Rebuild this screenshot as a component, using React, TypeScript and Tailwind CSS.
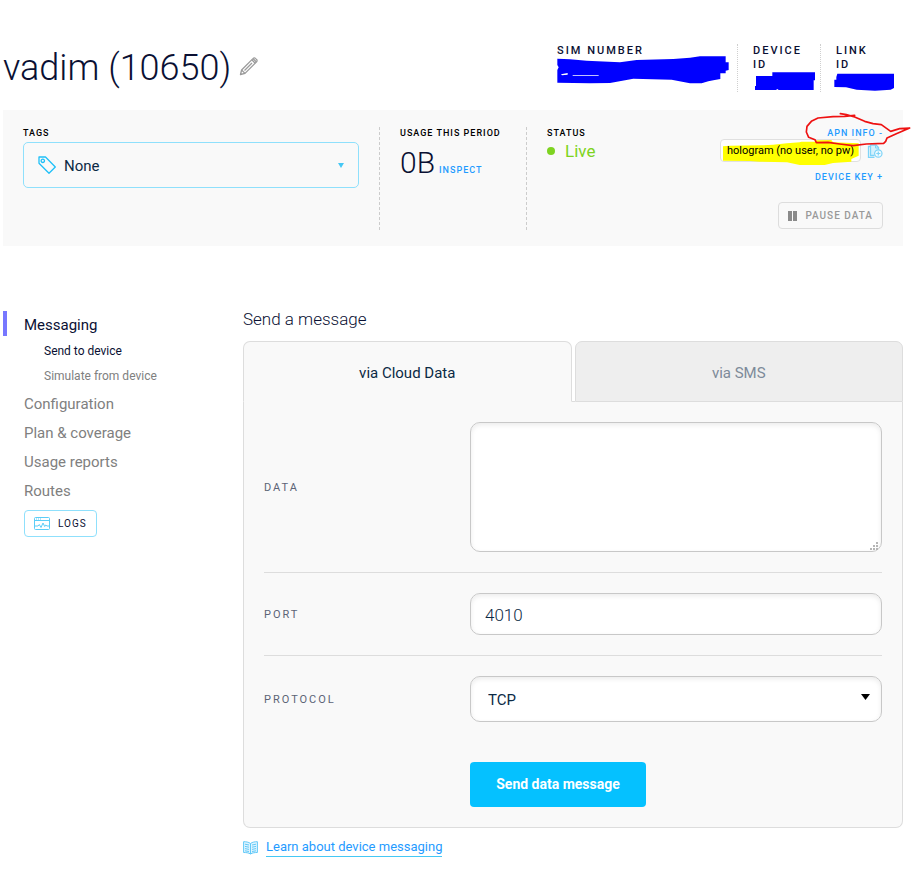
import { useState } from "react";

const NAV_ITEMS = ["Configuration", "Plan & coverage", "Usage reports", "Routes"];

const fieldClass =
  "block w-full rounded-[10px] border border-[#c8c8c8] bg-white text-[#0b2a45] shadow-[inset_0_2px_5px_rgba(0,0,0,0.08)] outline-none";
const smallLabel = "text-[9px] leading-3 font-medium tracking-[1px] uppercase";

function PencilIcon() {
  return (
    <svg width="20" height="20" viewBox="0 0 20 20" fill="none" stroke="#9b9b9b" strokeWidth="1.3" strokeLinejoin="round" aria-hidden="true">
      <path d="M1.500 18.500 2.600 14 14.200 2.400a1.500 1.500 0 0 1 2.200 0l1.200 1.200a1.500 1.500 0 0 1 0 2.200L6 17.400z" />
      <path d="M2.600 14 6 17.400M12.800 3.800l3.400 3.400M14.200 2.800l3 3M5.500 14.500l7.500-7.500" />
    </svg>
  );
}

function TagIcon() {
  return (
    <svg width="18" height="18" viewBox="0 0 18 18" fill="none" stroke="#1fc0f8" strokeWidth="1.3" strokeLinejoin="round" aria-hidden="true">
      <path d="M1 1h6.500L17.300 11 11 17.200 1 7.200z" />
      <circle cx="4.800" cy="4.800" r="1.700" />
    </svg>
  );
}

function CopyIcon() {
  return (
    <svg width="16" height="14" viewBox="0 0 16 14" fill="none" stroke="#7fd4f8" aria-hidden="true">
      <path d="M3 2.500H1.500v10.800H7.500" strokeWidth="1.300" />
      <path d="M7.500 11.500H3.500V1h5.500L11.500 3.500v2.500" fill="#d5f1fd" strokeWidth="1.300" />
      <path d="M8.500 1v3h3" />
      <circle cx="11.300" cy="9.500" r="3.700" fill="#f3fbfe" strokeWidth="1.200" />
      <path d="M11.300 7.500v4M9.300 9.500h4" strokeWidth="1.200" />
    </svg>
  );
}

function LogsIcon() {
  return (
    <svg width="16" height="13" viewBox="0 0 16 13" fill="none" stroke="#5bcdf7" aria-hidden="true">
      <rect x="0.5" y="0.5" width="15" height="12" rx="1" />
      <path d="M.5 3.500h15M2 2h1M4 2h1M6 2h1" />
      <path d="M.5 9h3.500l1.300-1.500 1.700 3 2-4.500 1.700 3.500 1-1.500 1.300 1h2.500" />
    </svg>
  );
}

function BookIcon() {
  return (
    <svg width="15" height="14" viewBox="0 0 15 14" fill="none" stroke="#62c9f8" aria-hidden="true">
      <path d="M7.500 2.500C5.500 1 3 .700.600.700v10.800c2.400 0 4.900.200 6.900 1.500 2-1.300 4.500-1.500 6.900-1.500V.700C12 .700 9.500 1 7.500 2.500z" fill="#dff4fe" />
      <path d="M7.500 2.500V13M2 3.200l4 .800M2 5.400l4 .800M2 7.600l4 .800M2 9.800l4 .700M13 3.200 9 4M13 5.400l-4 .800M13 7.600l-4 .800M13 9.800l-4 .700" />
    </svg>
  );
}

function Header() {
  return (
    <header className="flex items-start justify-between pt-11">
      <div className="flex items-center gap-2">
        <h1 className="text-[36px] leading-[48px] font-light text-[#0a1033]">vadim (10650)</h1>
        <button type="button" aria-label="Rename device" className="pb-1">
          <PencilIcon />
        </button>
      </div>
      <dl className="flex text-[11px] leading-[14px] font-medium tracking-[2px] text-[#0a1033]">
        <div className="w-[180px]">
          <dt>SIM NUMBER</dt>
          <dd className="-mt-0.5">
            <svg width="172" height="28" viewBox="51 78 516 84" fill="#0000ff" role="img" aria-label="Hidden">
              <path d="M52 86 90 88 140 92 240 97 290 90 400 87 450 83 480 79H557V97H566V120L557 122V130H541V147L520 151 505 154 485 160H450L395 149 280 146 210 159 150 160 52 158V120L56 112 52 105z" />
              <path d="M63 133 83 129V134L66 136zM98 135H176V137H98z" fill="#fff" />
            </svg>
          </dd>
        </div>
        <div className="w-[83px] border-l border-dotted border-[#cfcfcf] pl-[15px]">
          <dt>
            DEVICE
            <br />
            ID
          </dt>
          <dd>
            <svg width="63" height="19" viewBox="639 126 189 57" fill="#0000ff" role="img" aria-label="Hidden">
              <path d="M648 138H697V127H825V151H821V180H716L712 177 708 180H645V168H648z" />
            </svg>
          </dd>
        </div>
        <div className="w-[83px] border-l border-dotted border-[#cfcfcf] pl-[15px]">
          <dt>
            LINK
            <br />
            ID
          </dt>
          <dd className="-ml-0.5">
            <svg width="61" height="20" viewBox="882 129 183 60" fill="#0000ff" role="img" aria-label="Hidden">
              <path d="M892 134H1062V177L1052 182 1005 185 950 182 918 175 883 174V152H889V144z" />
            </svg>
          </dd>
        </div>
      </dl>
    </header>
  );
}

function Summary() {
  return (
    <section className="mt-[18px] flex bg-[#f9f9f9] px-5 pt-[17px] pb-4">
      <div className="min-w-0 flex-1 pr-5">
        <h2 className={`${smallLabel} text-black`}>Tags</h2>
        <button
          type="button"
          className="mt-[3px] flex h-[46px] w-full items-center rounded-[5px] border border-[#8fe0fc] px-3.5 text-[15px] text-[#0b2a45]"
        >
          <TagIcon />
          <span className="ml-2 pt-0.5">None</span>
          <svg className="ml-auto" width="6" height="5" viewBox="0 0 6 5" fill="#45c8f5" aria-hidden="true">
            <path d="M0 0h6L3 5z" />
          </svg>
        </button>
      </div>

      <div className="w-[147px] border-l border-dashed border-[#cccccc] pl-5">
        <h2 className={`${smallLabel} whitespace-nowrap text-black`}>Usage this period</h2>
        <p className="mt-1.5 flex items-baseline gap-1 text-[30px] leading-[36px] font-light text-[#0a1033]">
          0B
          <a href="#usage" className={`${smallLabel} text-[#1f9bff]`}>
            Inspect
          </a>
        </p>
      </div>

      <div className="flex h-[103px] w-[357px] justify-between border-l border-dashed border-[#cccccc] pl-5">
        <div>
          <h2 className={`${smallLabel} text-black`}>Status</h2>
          <p className="flex items-center gap-2.5 text-[17px] leading-6 text-[#7ed321]">
            <span className="size-2 rounded-full bg-[#7ed321]" />
            Live
          </p>
        </div>
        <div className="flex flex-col items-end">
          <div className="relative z-10">
            <button type="button" className={`${smallLabel} block text-[#1f9bff]`}>
              APN info -
            </button>
            <svg
              className="pointer-events-none absolute -top-[15px] -right-7 max-w-none"
              width="106"
              height="35"
              viewBox="46 12 318 105"
              fill="none"
              stroke="#ee1111"
              strokeWidth="5"
              strokeLinejoin="round"
              strokeLinecap="round"
              aria-hidden="true"
            >
              <path d="M152 17 170 20 195 27 225 40 250 47 275 50 303 70 330 62 360 60 320 77 292 90 288 100 282 106 230 108 190 113 150 108 115 103 80 104 76 95 57 88 50 72 52 55 65 40 85 30 130 26 165 25 195 22" />
            </svg>
          </div>
          <div className="flex items-center gap-1.5">
            <div className="relative flex h-[23px] items-center rounded-[4px] border border-[#e0e0e0] bg-white px-1.5">
              <svg className="absolute top-0 left-0 max-w-none" width="138" height="26" viewBox="64 103 414 78" fill="#ffff00" aria-hidden="true">
                <path d="M70 122 90 120 190 119 220 117 262 113 300 110 305 108 345 108 350 104 395 103 400 110 477 113V150L455 160V168L400 172 375 178H300L262 170 180 168 150 166 70 165z" />
              </svg>
              <span className="relative text-[11px] leading-3 text-black">hologram (no user, no pw)</span>
            </div>
            <button type="button" aria-label="Copy APN">
              <CopyIcon />
            </button>
          </div>
          <button type="button" className={`${smallLabel} mt-[9px] text-[#1f9bff]`}>
            Device key +
          </button>
          <button
            type="button"
            className="mt-[19px] flex h-[27px] shrink-0 items-center gap-2 rounded-[4px] border border-[#dddddd] px-[9px] text-[10px] font-medium tracking-[1px] text-[#999999]"
          >
            <svg width="9" height="10" viewBox="0 0 9 10" fill="#8a8a8a" aria-hidden="true">
              <path d="M0 0h4v10H0zM5 0h4v10H5z" />
            </svg>
            PAUSE DATA
          </button>
        </div>
      </div>
    </section>
  );
}

function Sidebar() {
  return (
    <nav className="w-60 shrink-0 text-[15px] text-[#808080]">
      <a href="#messaging" className="block border-l-4 border-[#7777ff] pt-1 pl-[17px] leading-[21px] text-[#0a1033]">
        Messaging
      </a>
      <ul className="mt-[3px] pl-[41px] text-xs leading-[25px]">
        <li>
          <a href="#send" className="text-[#0a1033]">
            Send to device
          </a>
        </li>
        <li>
          <a href="#simulate">Simulate from device</a>
        </li>
      </ul>
      <ul className="mt-px pl-[21px] leading-[29px]">
        {NAV_ITEMS.map((item) => (
          <li key={item}>
            <a href="#">{item}</a>
          </li>
        ))}
      </ul>
      <button
        type="button"
        className="mt-1 ml-[21px] flex h-[27px] items-center gap-2 rounded-[4px] border border-[#8fe0fc] px-[9px] text-[10px] tracking-[1px] text-[#0a1033]"
      >
        <LogsIcon />
        LOGS
      </button>
    </nav>
  );
}

function Field({ id, label, children }: { id: string; label: string; children: React.ReactNode }) {
  return (
    <div className="flex items-center border-b border-[#dddddd] py-5 last:border-b-0">
      <label htmlFor={id} className="w-[206px] shrink-0 pt-0.5 text-[11px] tracking-[2px] text-[#5c6476]">
        {label}
      </label>
      <div className="relative min-w-0 flex-1">{children}</div>
    </div>
  );
}

function MessageForm() {
  const [tab, setTab] = useState("cloud");
  const tabClass = (name: string) =>
    name === tab
      ? "border-b-[#f9f9f9] bg-[#f9f9f9] text-[#0b2a45]"
      : "bg-[#eeeeee] border-b-[#dddddd] text-[#7d8a99]";

  return (
    <main className="min-w-0 flex-1">
      <h2 className="text-[17px] leading-6 font-light text-[#0a1033]">Send a message</h2>
      <div role="tablist" className="mt-2.5 flex">
        <button
          type="button"
          role="tab"
          aria-selected={tab === "cloud"}
          onClick={() => setTab("cloud")}
          className={`h-[61px] flex-1 rounded-t-[7px] border border-[#dddddd] pt-1 text-[15px] ${tabClass("cloud")}`}
        >
          via Cloud Data
        </button>
        <span className="w-[3px] border-b border-[#dddddd]" />
        <button
          type="button"
          role="tab"
          aria-selected={tab === "sms"}
          onClick={() => setTab("sms")}
          className={`h-[61px] flex-1 rounded-t-[7px] border border-[#dddddd] pt-1 text-[15px] ${tabClass("sms")}`}
        >
          via SMS
        </button>
      </div>

      <form
        className="rounded-b-[7px] border border-t-0 border-[#dddddd] bg-[#f9f9f9] px-5 pb-5"
        onSubmit={(e) => e.preventDefault()}
      >
        <div>
          <Field id="data" label="DATA">
            <textarea id="data" className={`${fieldClass} h-[130px] resize-none p-3 text-base`} />
            <svg className="pointer-events-none absolute right-1 bottom-0.5" width="8" height="8" viewBox="0 0 8 8" fill="#b5b5b5" aria-hidden="true">
              <path d="M6 0h2v2H6zM3 3h2v2H3zM6 3h2v2H6zM0 6h2v2H0zM3 6h2v2H3zM6 6h2v2H6z" />
            </svg>
          </Field>
          <Field id="port" label="PORT">
            <input id="port" type="text" defaultValue="4010" className={`${fieldClass} h-[42px] px-3.5 pt-0.5 text-[17px] font-light`} />
          </Field>
          <Field id="protocol" label="PROTOCOL">
            <select id="protocol" defaultValue="TCP" className={`${fieldClass} h-[46px] appearance-none px-[17px] pt-0.5 text-[15px]`}>
              <option>TCP</option>
              <option>UDP</option>
            </select>
            <svg className="pointer-events-none absolute top-[18px] right-3" width="9" height="6" viewBox="0 0 9 6" aria-hidden="true">
              <path d="M0 0h9L4.500 6z" />
            </svg>
          </Field>
        </div>
        <button
          type="submit"
          className="mt-5 ml-[206px] block h-[45px] w-44 rounded-[4px] bg-[#05c1ff] text-[14px] font-bold text-white"
        >
          Send data message
        </button>
      </form>

      <p className="mt-2.5 flex items-center gap-2">
        <BookIcon />
        <a href="#docs" className="border-b border-[#45c8f5] text-[13px] leading-[18px] text-[#1f9bff]">
          Learn about device messaging
        </a>
      </p>
    </main>
  );
}

export default function App() {
  return (
    <div className="min-h-screen bg-white pr-4 pb-8 pl-[3px] font-[Roboto,'Liberation_Sans',sans-serif]">
      <Header />
      <Summary />
      <div className="mt-[61px] flex items-start">
        <div className="pt-1">
          <Sidebar />
        </div>
        <MessageForm />
      </div>
    </div>
  );
}
